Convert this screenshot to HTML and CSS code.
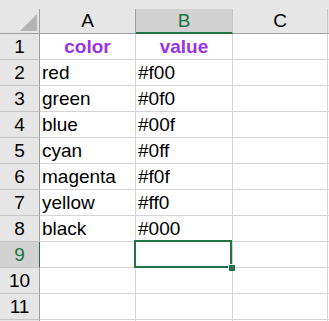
FILE: index.html
```html
<!DOCTYPE html>
<html lang="en">
<head>
<meta charset="UTF-8">
<meta name="viewport" content="width=device-width, initial-scale=1.0">
<title>Sheet</title>
<link rel="stylesheet" href="styles.css">
</head>
<body>

<div class="sheet">
    <!-- column headers -->
    <div class="hd corner"><div class="tri"></div></div>
    <div class="hd col edge">A</div>
    <div class="hd col sel">B</div>
    <div class="hd col">C</div>
    <div class="hd col last"></div>

    <div class="hd row">1</div>
    <div class="cell title">color</div>
    <div class="cell title">value</div>
    <div class="cell"></div>
    <div class="cell last"></div>

    <div class="hd row">2</div>
    <div class="cell">red</div>
    <div class="cell">#f00</div>
    <div class="cell"></div>
    <div class="cell last"></div>

    <div class="hd row">3</div>
    <div class="cell">green</div>
    <div class="cell">#0f0</div>
    <div class="cell"></div>
    <div class="cell last"></div>

    <div class="hd row">4</div>
    <div class="cell">blue</div>
    <div class="cell">#00f</div>
    <div class="cell"></div>
    <div class="cell last"></div>

    <div class="hd row">5</div>
    <div class="cell">cyan</div>
    <div class="cell">#0ff</div>
    <div class="cell"></div>
    <div class="cell last"></div>

    <div class="hd row">6</div>
    <div class="cell">magenta</div>
    <div class="cell">#f0f</div>
    <div class="cell"></div>
    <div class="cell last"></div>

    <div class="hd row">7</div>
    <div class="cell">yellow</div>
    <div class="cell">#ff0</div>
    <div class="cell"></div>
    <div class="cell last"></div>

    <div class="hd row">8</div>
    <div class="cell">black</div>
    <div class="cell">#000</div>
    <div class="cell"></div>
    <div class="cell last"></div>

    <div class="hd row sel">9</div>
    <div class="cell"></div>
    <div class="cell active"><div class="box"><span class="handle"></span></div></div>
    <div class="cell"></div>
    <div class="cell last"></div>

    <div class="hd row">10</div>
    <div class="cell"></div>
    <div class="cell"></div>
    <div class="cell"></div>
    <div class="cell last"></div>

    <div class="hd row">11</div>
    <div class="cell"></div>
    <div class="cell"></div>
    <div class="cell"></div>
    <div class="cell last"></div>

    <!-- 1px sliver of row 12 -->
    <div class="hd row end"></div>
    <div class="cell end"></div>
    <div class="cell end"></div>
    <div class="cell end"></div>
    <div class="cell last end"></div>
</div>

</body>
</html>
```

FILE: styles.css
```css
html, body {
    margin: 0;
    padding: 0;
    overflow: hidden;
}

body {
    background: #e6e6e6;
    font-family: "Liberation Sans", Arial, sans-serif;
    font-size: 19px;
    color: #000;
    padding-top: 9px;
}

.sheet {
    display: grid;
    grid-template-columns: 40px 96px 97px 95px 1fr;
    grid-template-rows: 25px repeat(11, 26px) 1px;
    width: 329px;
}

.hd, .cell {
    box-sizing: border-box;
    border-right: 1px solid #d4d4d4;
    border-bottom: 1px solid #d4d4d4;
    display: flex;
    align-items: center;
    white-space: nowrap;
    overflow: hidden;
}

.hd {
    background: #e6e6e6;
    justify-content: center;
}

.hd.col {
    border-right-color: #c6c6c6;
    border-bottom-color: #9e9e9e;
}

.hd.col.edge {
    border-right-color: #9e9e9e;
}

.hd.row {
    border-right-color: #9e9e9e;
    border-bottom-color: #c6c6c6;
}

.hd.sel {
    background: #d2d2d2;
    color: #217346;
}

.hd.col.sel {
    border-bottom: 2px solid #217346;
}

.hd.row.sel {
    border-right-color: #217346;
}

.corner {
    border-right-color: #9e9e9e;
    border-bottom-color: #9e9e9e;
    justify-content: flex-end;
    align-items: flex-end;
    padding: 0 2px 2px 0;
}

.tri {
    width: 17px;
    height: 17px;
    background: #b4b4b4;
    clip-path: polygon(100% 0, 100% 100%, 0 100%);
}

.cell {
    background: #fff;
    padding-left: 2px;
}

.last {
    border-right: none;
}

.end {
    border-bottom: none;
}

.title {
    justify-content: center;
    font-weight: bold;
    color: #9b32e6;
    padding-left: 0;
}

.active {
    position: relative;
    overflow: visible;
}

.box {
    position: absolute;
    left: -2px;
    top: -2px;
    right: 0;
    bottom: -1px;
    border: 2px solid #217346;
    z-index: 2;
}

.handle {
    position: absolute;
    right: -5px;
    bottom: -5px;
    width: 6px;
    height: 6px;
    background: #217346;
    border: 1px solid #fff;
    border-right: none;
    border-bottom: none;
}
```
